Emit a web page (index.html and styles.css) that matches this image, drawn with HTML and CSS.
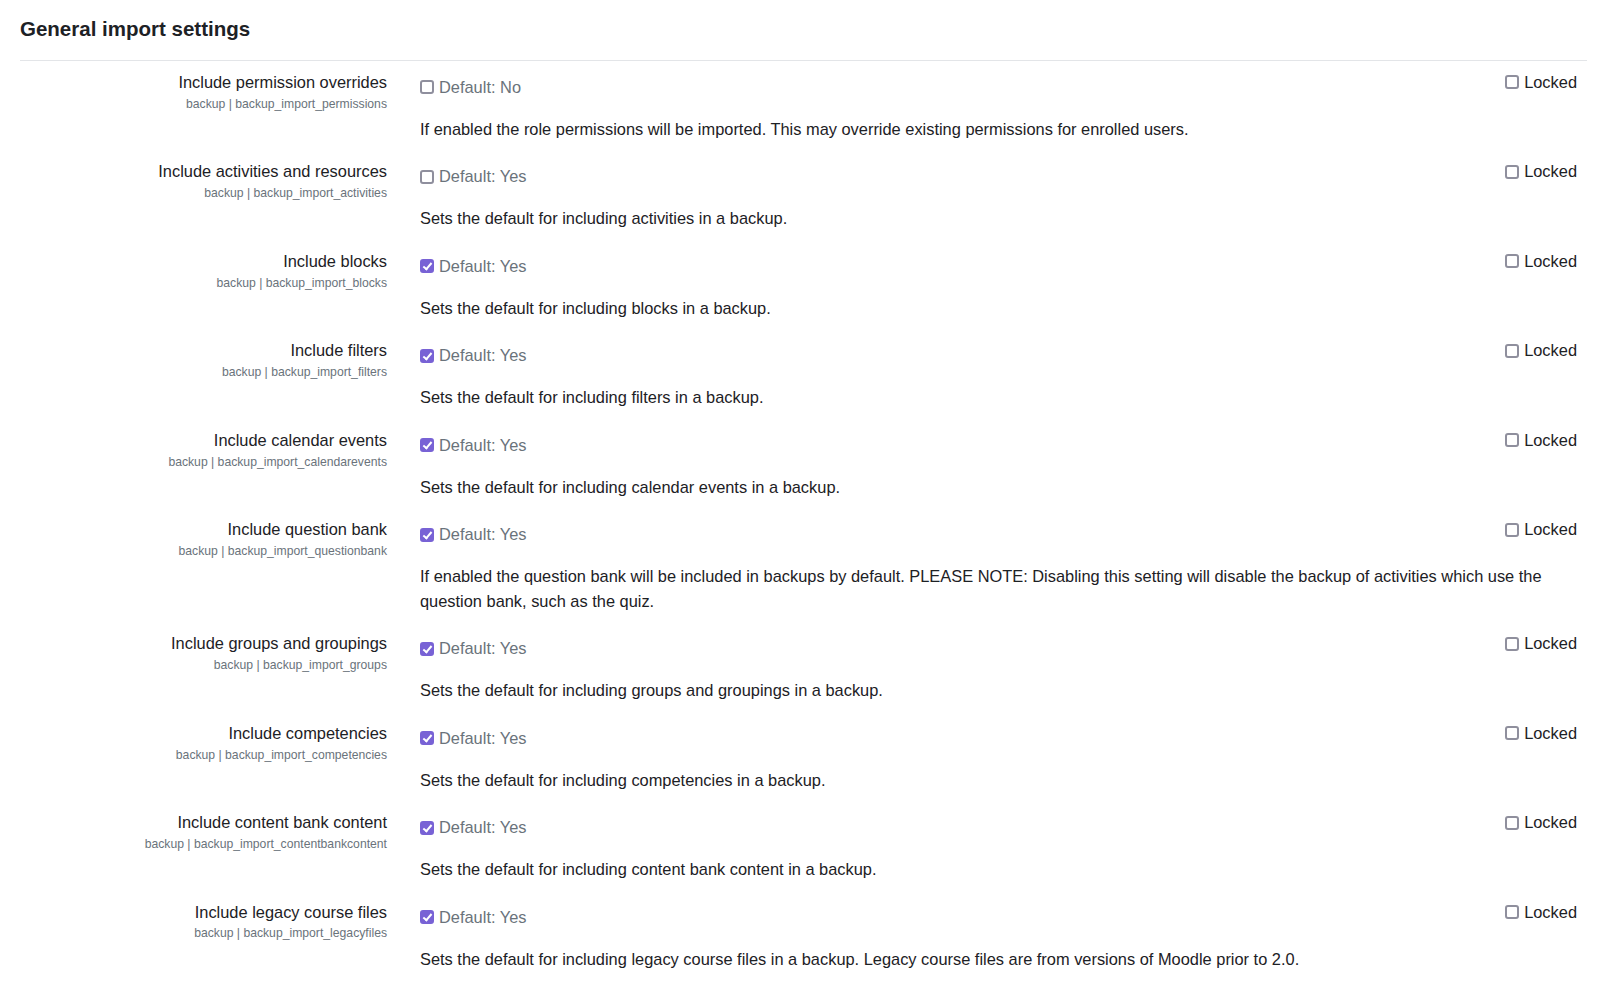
FILE: index.html
```html
<!DOCTYPE html>
<html>
<head>
    <link rel="stylesheet" href="styles.css">
</head>
<body>
    <div class="page">
        <h3 class="page-title">General import settings</h3>
        <hr class="divider">

        <div class="setting">
            <div class="setting-label">
                <div class="label-title">Include permission overrides</div>
                <div class="label-key">backup | backup_import_permissions</div>
            </div>
            <div class="setting-body">
                <div class="setting-top">
                    <label class="default-check"><input type="checkbox"> Default: No</label>
                    <label class="lock-check"><input type="checkbox"> Locked</label>
                </div>
                <div class="setting-desc">If enabled the role permissions will be imported. This may override existing permissions for enrolled users.</div>
            </div>
        </div>

        <div class="setting">
            <div class="setting-label">
                <div class="label-title">Include activities and resources</div>
                <div class="label-key">backup | backup_import_activities</div>
            </div>
            <div class="setting-body">
                <div class="setting-top">
                    <label class="default-check"><input type="checkbox"> Default: Yes</label>
                    <label class="lock-check"><input type="checkbox"> Locked</label>
                </div>
                <div class="setting-desc">Sets the default for including activities in a backup.</div>
            </div>
        </div>

        <div class="setting">
            <div class="setting-label">
                <div class="label-title">Include blocks</div>
                <div class="label-key">backup | backup_import_blocks</div>
            </div>
            <div class="setting-body">
                <div class="setting-top">
                    <label class="default-check"><input type="checkbox" checked> Default: Yes</label>
                    <label class="lock-check"><input type="checkbox"> Locked</label>
                </div>
                <div class="setting-desc">Sets the default for including blocks in a backup.</div>
            </div>
        </div>

        <div class="setting">
            <div class="setting-label">
                <div class="label-title">Include filters</div>
                <div class="label-key">backup | backup_import_filters</div>
            </div>
            <div class="setting-body">
                <div class="setting-top">
                    <label class="default-check"><input type="checkbox" checked> Default: Yes</label>
                    <label class="lock-check"><input type="checkbox"> Locked</label>
                </div>
                <div class="setting-desc">Sets the default for including filters in a backup.</div>
            </div>
        </div>

        <div class="setting">
            <div class="setting-label">
                <div class="label-title">Include calendar events</div>
                <div class="label-key">backup | backup_import_calendarevents</div>
            </div>
            <div class="setting-body">
                <div class="setting-top">
                    <label class="default-check"><input type="checkbox" checked> Default: Yes</label>
                    <label class="lock-check"><input type="checkbox"> Locked</label>
                </div>
                <div class="setting-desc">Sets the default for including calendar events in a backup.</div>
            </div>
        </div>

        <div class="setting">
            <div class="setting-label">
                <div class="label-title">Include question bank</div>
                <div class="label-key">backup | backup_import_questionbank</div>
            </div>
            <div class="setting-body">
                <div class="setting-top">
                    <label class="default-check"><input type="checkbox" checked> Default: Yes</label>
                    <label class="lock-check"><input type="checkbox"> Locked</label>
                </div>
                <div class="setting-desc">If enabled the question bank will be included in backups by default. PLEASE NOTE: Disabling this setting will disable the backup of activities which use the question bank, such as the quiz.</div>
            </div>
        </div>

        <div class="setting">
            <div class="setting-label">
                <div class="label-title">Include groups and groupings</div>
                <div class="label-key">backup | backup_import_groups</div>
            </div>
            <div class="setting-body">
                <div class="setting-top">
                    <label class="default-check"><input type="checkbox" checked> Default: Yes</label>
                    <label class="lock-check"><input type="checkbox"> Locked</label>
                </div>
                <div class="setting-desc">Sets the default for including groups and groupings in a backup.</div>
            </div>
        </div>

        <div class="setting">
            <div class="setting-label">
                <div class="label-title">Include competencies</div>
                <div class="label-key">backup | backup_import_competencies</div>
            </div>
            <div class="setting-body">
                <div class="setting-top">
                    <label class="default-check"><input type="checkbox" checked> Default: Yes</label>
                    <label class="lock-check"><input type="checkbox"> Locked</label>
                </div>
                <div class="setting-desc">Sets the default for including competencies in a backup.</div>
            </div>
        </div>

        <div class="setting">
            <div class="setting-label">
                <div class="label-title">Include content bank content</div>
                <div class="label-key">backup | backup_import_contentbankcontent</div>
            </div>
            <div class="setting-body">
                <div class="setting-top">
                    <label class="default-check"><input type="checkbox" checked> Default: Yes</label>
                    <label class="lock-check"><input type="checkbox"> Locked</label>
                </div>
                <div class="setting-desc">Sets the default for including content bank content in a backup.</div>
            </div>
        </div>

        <div class="setting">
            <div class="setting-label">
                <div class="label-title">Include legacy course files</div>
                <div class="label-key">backup | backup_import_legacyfiles</div>
            </div>
            <div class="setting-body">
                <div class="setting-top">
                    <label class="default-check"><input type="checkbox" checked> Default: Yes</label>
                    <label class="lock-check"><input type="checkbox"> Locked</label>
                </div>
                <div class="setting-desc">Sets the default for including legacy course files in a backup. Legacy course files are from versions of Moodle prior to 2.0.</div>
            </div>
        </div>
    </div>
</body>
</html>
```

FILE: styles.css
```css
body {
    margin: 0;
    background: #fff;
    color: #1d2125;
    font-family: "Liberation Sans", Arial, sans-serif;
    font-size: 16.4px;
    line-height: 24.75px;
}

.page {
    padding: 17px 28px 0 20px;
}

.page-title {
    margin: 0;
    font-size: 20.5px;
    line-height: 24px;
    font-weight: bold;
}

.divider {
    margin: 19px 0 9px 0;
    border: none;
    border-top: 1px solid #e3e5e8;
}

.setting {
    display: grid;
    grid-template-columns: 367px 1fr;
    column-gap: 33px;
    margin-bottom: 17.75px;
}

.setting-label {
    text-align: right;
}

.label-key {
    padding-top: 1px;
    font-size: 12.2px;
    line-height: 17px;
    color: #6a737b;
}

.setting-body {
    padding-right: 10px;
}

.setting-top {
    display: flex;
    justify-content: space-between;
    align-items: flex-start;
    padding-top: 5px;
}

.default-check {
    display: flex;
    align-items: center;
    gap: 5px;
    color: #6a737b;
}

.lock-check {
    display: flex;
    align-items: center;
    gap: 5px;
    margin-top: -5px;
    color: #1d2125;
}

/* firefox-like checkbox */
input[type="checkbox"] {
    appearance: none;
    -webkit-appearance: none;
    position: relative;
    margin: 0;
    width: 14px;
    height: 14px;
    border: 2px solid #8f8f9d;
    border-radius: 3px;
    background: #fff;
    flex-shrink: 0;
}

input[type="checkbox"]:checked {
    border-color: #7862d5;
    background: #7862d5;
}

input[type="checkbox"]:checked::after {
    content: "";
    position: absolute;
    left: 3px;
    top: 0px;
    width: 3px;
    height: 7px;
    border: solid #fff;
    border-width: 0 2px 2px 0;
    transform: rotate(40deg);
}

.setting-desc {
    margin-top: 17.2px;
}
```
